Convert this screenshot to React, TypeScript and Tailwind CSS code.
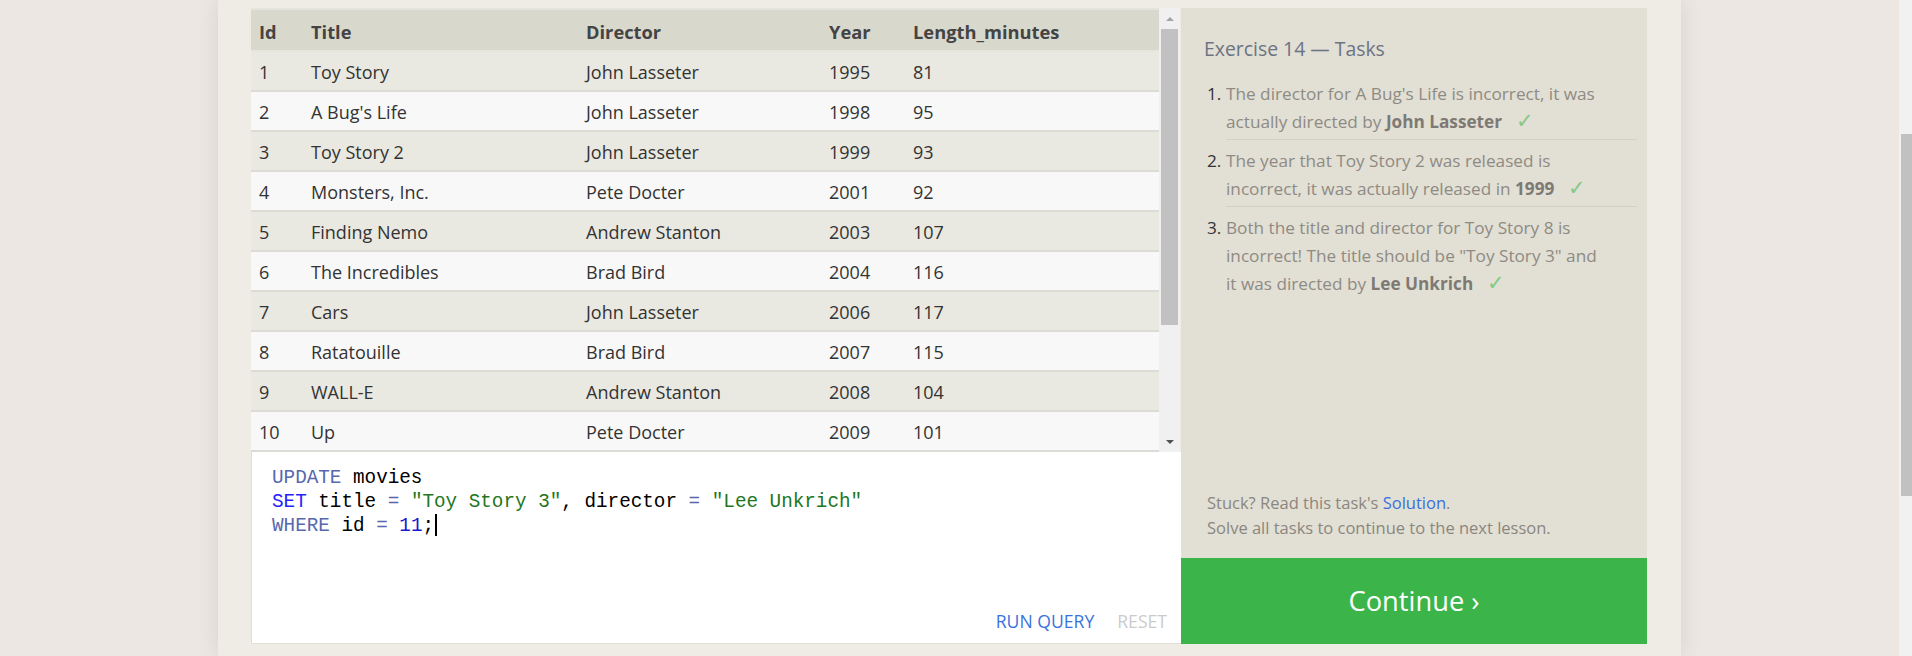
import React from "react";

const rows = [
  [1, "Toy Story", "John Lasseter", 1995, 81],
  [2, "A Bug's Life", "John Lasseter", 1998, 95],
  [3, "Toy Story 2", "John Lasseter", 1999, 93],
  [4, "Monsters, Inc.", "Pete Docter", 2001, 92],
  [5, "Finding Nemo", "Andrew Stanton", 2003, 107],
  [6, "The Incredibles", "Brad Bird", 2004, 116],
  [7, "Cars", "John Lasseter", 2006, 117],
  [8, "Ratatouille", "Brad Bird", 2007, 115],
  [9, "WALL-E", "Andrew Stanton", 2008, 104],
  [10, "Up", "Pete Docter", 2009, 101],
];

const cols = "grid grid-cols-[52px_275px_243px_84px_254px]";

function Check() {
  return <span className="ml-[14px] text-[21px] leading-[20px] text-[#82c984]">✓</span>;
}

export default function App() {
  return (
    <div
      className="flex h-[656px] w-full overflow-hidden bg-[#ece7e3]"
      style={{ fontFamily: '"Open Sans", "Noto Sans", sans-serif' }}
    >
      <div className="flex flex-1 justify-center">
        <div className="flex h-[656px] w-[1463px] flex-col bg-[#efece5] px-[33px] pt-[8px] shadow-[0_0_22px_rgba(0,0,0,0.09)]">
          <div className="flex">
            {/* left column */}
            <div className="flex w-[930px] flex-col">
              <div className="flex">
                <div className="w-[908px] border-t-2 border-[#e5e4dc] text-[18px] text-[#333]">
                  <div className={`${cols} h-[42px] items-center border-b-2 border-[#e6e5de] bg-[#d9d8cd] pl-[8px] pt-[3px] text-[18.3px] font-bold text-[#444]`}>
                    <div>Id</div>
                    <div>Title</div>
                    <div>Director</div>
                    <div>Year</div>
                    <div>Length_minutes</div>
                  </div>
                  {rows.map((r, i) => (
                    <div
                      key={i}
                      className={`${cols} h-[40px] items-center border-b-2 border-[#dcdbd6] pl-[8px] pt-[2px] ${i % 2 === 0 ? "bg-[#e9e8e1]" : "bg-[#f8f8f8]"}`}
                    >
                      {r.map((c, j) => (
                        <div key={j} className="whitespace-nowrap">{c}</div>
                      ))}
                    </div>
                  ))}
                </div>
                {/* table scrollbar */}
                <div className="flex w-[21px] flex-col items-center bg-[#f0f0f0]">
                  <div className="flex h-[21px] items-center justify-center">
                    <div className="h-0 w-0 border-x-[4px] border-b-[4px] border-x-transparent border-b-[#a3a3a3]" />
                  </div>
                  <div className="h-[296px] w-[17px] bg-[#c1c1c1]" />
                  <div className="flex-1" />
                  <div className="flex h-[21px] items-center justify-center">
                    <div className="h-0 w-0 border-x-[4px] border-t-[4px] border-x-transparent border-t-[#505050]" />
                  </div>
                </div>
              </div>
              {/* editor */}
              <div className="flex h-[192px] flex-col border-b border-l border-[#e2dfd4] bg-white">
                <div
                  className="flex-1 pl-[20px] pt-[14px] text-[19.3px] leading-[24px] text-black"
                  style={{ fontFamily: '"Liberation Mono", "DejaVu Sans Mono", monospace' }}
                >
                  <div className="whitespace-pre">
                    <span className="text-[#5768ad]">UPDATE</span> movies
                  </div>
                  <div className="whitespace-pre">
                    <span className="text-[#2323ff]">SET</span> title <span className="text-[#5768ad]">=</span>{" "}
                    <span className="text-[#1e771e]">"Toy Story 3"</span>, director <span className="text-[#5768ad]">=</span>{" "}
                    <span className="text-[#1e771e]">"Lee Unkrich"</span>
                  </div>
                  <div className="whitespace-pre">
                    <span className="text-[#5768ad]">WHERE</span> id <span className="text-[#5768ad]">=</span>{" "}
                    <span className="text-[#1717d0]">11</span>;<span className="ml-[1px] inline-block h-[22px] w-[2px] bg-black align-[-5px]" />
                  </div>
                </div>
                <div className="flex justify-end gap-[23px] pb-[10px] pr-[14px] text-[17.6px] leading-[24px]">
                  <span className="text-[#3a72e0]">RUN QUERY</span>
                  <span className="text-[#cbcbcb]">RESET</span>
                </div>
              </div>
            </div>
            {/* right panel */}
            <div className="flex h-[636px] w-[466px] flex-col bg-[#e2dfd4]">
              <div className="flex-1 pl-[23px] pr-[10px] pt-[28px]">
                <div className="text-[19.4px] leading-[26px] text-[#6b7385]">Exercise 14 — Tasks</div>
                <ol className="mt-[11px] text-[17.2px] leading-[28px] text-[#8e8b84]">
                  <li className="flex">
                    <span className="w-[22px] pl-[3px] pt-[7px] text-[#333]">1.</span>
                    <div className="flex-1 border-b border-[#d3d0c5] pb-[3px] pt-[7px]">
                      The director for A Bug's Life is incorrect, it was
                      <br />
                      actually directed by <b className="text-[#7d7a74]">John Lasseter</b>
                      <Check />
                    </div>
                  </li>
                  <li className="flex">
                    <span className="w-[22px] pl-[3px] pt-[7px] text-[#333]">2.</span>
                    <div className="flex-1 border-b border-[#d3d0c5] pb-[3px] pt-[7px]">
                      The year that Toy Story 2 was released is
                      <br />
                      incorrect, it was actually released in <b className="text-[#7d7a74]">1999</b>
                      <Check />
                    </div>
                  </li>
                  <li className="flex">
                    <span className="w-[22px] pl-[3px] pt-[7px] text-[#333]">3.</span>
                    <div className="flex-1 pb-[3px] pt-[7px]">
                      Both the title and director for Toy Story 8 is
                      <br />
                      incorrect! The title should be "Toy Story 3" and
                      <br />
                      it was directed by <b className="text-[#7d7a74]">Lee Unkrich</b>
                      <Check />
                    </div>
                  </li>
                </ol>
              </div>
              <div className="pb-[18px] pl-[26px] text-[16.5px] leading-[25px] text-[#8a8780]">
                <div>
                  Stuck? Read this task's <span className="text-[#3a6fe0]">Solution</span>.
                </div>
                <div>Solve all tasks to continue to the next lesson.</div>
              </div>
              <div className="flex h-[86px] items-center justify-center bg-[#3bb54a] text-[27.3px] text-white">
                Continue ›
              </div>
            </div>
          </div>
        </div>
      </div>
      {/* page scrollbar */}
      <div className="flex w-[13px] flex-col bg-[#f1f1f1]">
        <div className="h-[134px]" />
        <div className="ml-[2px] h-[362px] bg-[#c1c1c1]" />
      </div>
    </div>
  );
}
